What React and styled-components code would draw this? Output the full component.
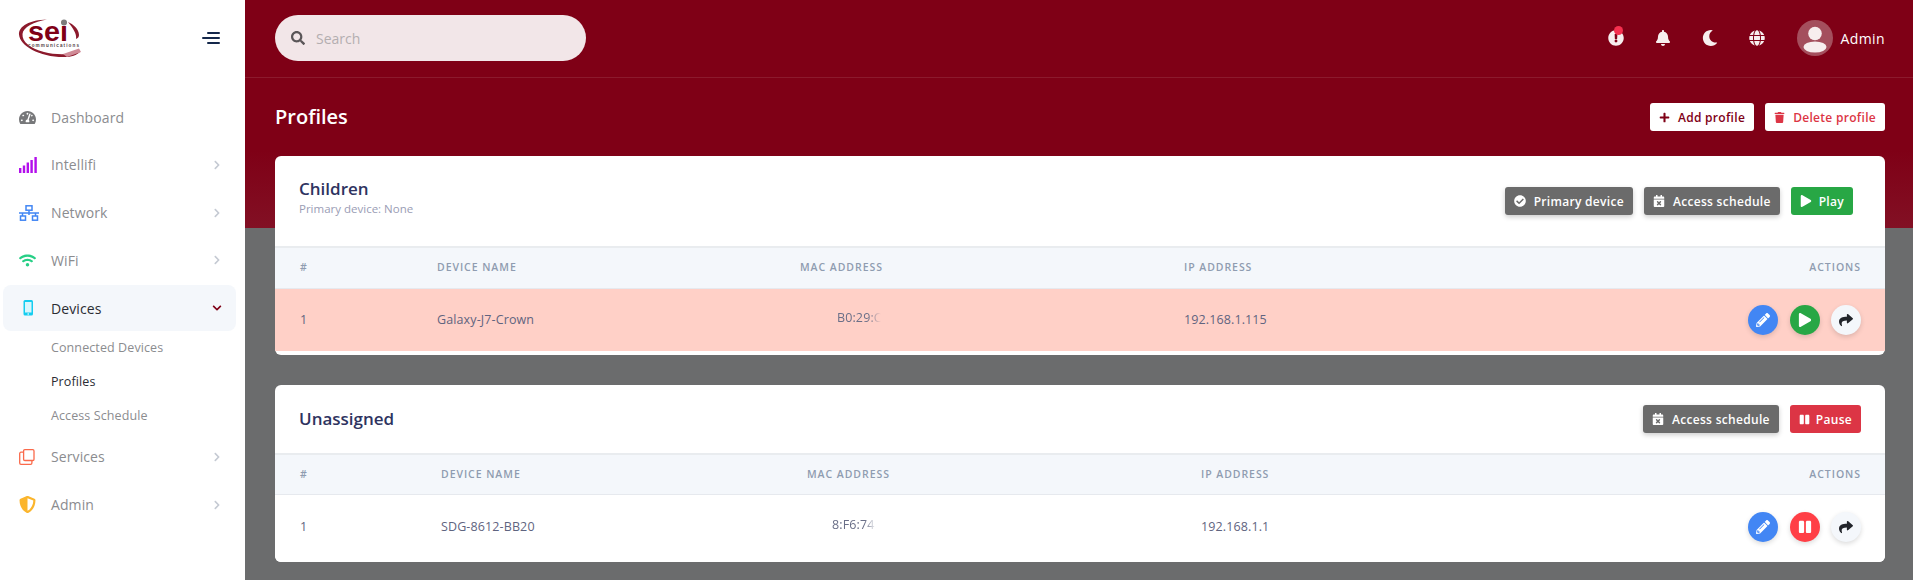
import React from "react";
import styled, { createGlobalStyle } from "styled-components";
import {
  FaTachometerAlt, FaWifi, FaChevronRight, FaChevronDown, FaShieldAlt, FaSearch, FaExclamationCircle,
  FaBell, FaMoon, FaGlobe, FaPlus, FaTrash, FaCheckCircle, FaCalendarTimes, FaPlay, FaPause, FaPencilAlt, FaShare,
} from "react-icons/fa";

const Global = createGlobalStyle`
  html, body { margin: 0; padding: 0; height: 580px; overflow: hidden; background: #6b6c6d; }
  body { font-family: "Open Sans", "Noto Sans", sans-serif; }
  * { box-sizing: border-box; }
`;

const Page = styled.div`display: flex; width: 1913px; height: 580px; overflow: hidden;`;
const Sidebar = styled.aside`width: 245px; flex: none; background: #fff; display: flex; flex-direction: column;`;
const Brand = styled.div`
  height: 94px; padding: 19px 25px 0 19px; display: flex; justify-content: space-between; align-items: flex-start;
  svg { overflow: visible; }
`;
const Burger = styled.div`
  width: 18px; margin-top: 13px; display: flex; flex-direction: column; align-items: flex-end; gap: 3px;
  span { display: block; height: 2px; background: #14284b; border-radius: 1px; }
  span:nth-child(1) { width: 13px; }
  span:nth-child(2) { width: 18px; }
  span:nth-child(3) { width: 13px; }
`;
const Nav = styled.nav`display: flex; flex-direction: column; gap: 1.75px; padding: 0 9px 0 3px;`;
const NavRow = styled.div`
  height: 46px; display: flex; align-items: center; padding: 0 13px 0 16px; border-radius: 8px;
  background: ${p => (p.$open ? "#f4f7fb" : "transparent")};
  color: ${p => (p.$open ? "#2b2d33" : "#8b8c8f")};
  font-size: 14px;
`;
const NavIcon = styled.span`width: 32px; flex: none; display: flex; align-items: center; color: ${p => p.$c}; font-size: 17px;`;
const NavText = styled.span`flex: 1; letter-spacing: .1px;`;
const Chevron = styled.span`width: 12px; display: flex; justify-content: center; font-size: 10px; color: ${p => p.$c || "#c5cad3"};`;
const SubList = styled.div`display: flex; flex-direction: column; margin-bottom: -.5px; margin-top: -2.25px;`;
const SubItem = styled.div`
  height: 34px; line-height: 34px; padding-left: 48px; font-size: 12.5px; letter-spacing: .1px;
  color: ${p => (p.$active ? "#2b2d33" : "#8b8c8f")};
`;

const Main = styled.main`
  flex: 1; min-width: 0; height: 580px;
  background: linear-gradient(#7f0016 0, #7f0016 150px, #821024 228px, #6b6c6d 228px, #6b6c6d 100%);
`;
const Header = styled.header`
  height: 78px; border-bottom: 1px solid rgba(255,255,255,.1); display: flex; align-items: center;
  padding: 0 28px 1px 30px; justify-content: space-between;
`;
const Search = styled.div`
  width: 311px; height: 46px; border-radius: 23px; background: #f2e6e8; display: flex; align-items: center;
  padding-left: 16px; gap: 11px; color: #5a5658; font-size: 14px;
`;
const Placeholder = styled.span`color: #b4aeb0; font-size: 14px;`;
const TopRight = styled.div`display: flex; align-items: center; color: #fff;`;
const TopIcon = styled.span`
  position: relative; width: 47px; height: 20px; display: flex; align-items: center; justify-content: center; font-size: 16px; color: #f7eeee;
`;
const Dot = styled.span`position: absolute; top: -2px; left: 21px; width: 9px; height: 9px; border-radius: 50%; background: #f5304f;`;
const Avatar = styled.span`
  width: 36px; height: 36px; border-radius: 50%; background: #a44f5d; margin-left: 16px; margin-right: 8px; overflow: hidden; display: block;
`;
const UserName = styled.span`font-size: 14px; font-weight: 500; letter-spacing: .4px;`;

const PageHead = styled.div`height: 78px; padding: 0 28px 0 30px; display: flex; align-items: center; justify-content: space-between;`;
const Title = styled.h1`margin: 0; font-size: 20px; font-weight: 600; color: #fff; line-height: 26px;`;
const Row = styled.div`display: flex; gap: ${p => p.$gap || 11}px;`;
const Btn = styled.button`
  height: 28px; border: 0; border-radius: 3px; padding: 0 ${p => p.$px || 9}px; display: flex; align-items: center; gap: ${p => p.$g || 8}px;
  font: 600 12px "Open Sans", "Noto Sans", sans-serif; letter-spacing: .3px;
  background: ${p => p.$bg}; color: ${p => p.$fg || "#fff"};
  box-shadow: ${p => (p.$shadow ? "0 2px 5px rgba(0,0,0,.2)" : "none")};
`;

const Cards = styled.div`display: flex; flex-direction: column; gap: 30px; padding: 0 28px 0 30px;`;
const Card = styled.section`background: #fff; border-radius: 6px; padding-bottom: ${p => p.$pb || 0}px; overflow: hidden;`;
const CardHead = styled.div`
  height: ${p => p.$h}px; display: flex; align-items: ${p => (p.$top ? "flex-start" : "center")}; justify-content: space-between;
  padding: ${p => (p.$top ? "21px" : "0")} ${p => p.$pr}px 0 24px;
`;
const CardTitle = styled.h2`margin: 0; font-size: 17px; font-weight: 600; line-height: 24px; color: #2e3360;`;
const CardSub = styled.p`margin: -1px 0 0; font-size: 11.5px; line-height: 18px; color: #9a9db5; font-weight: 500;`;
const CardActions = styled.div`display: flex; gap: 11px; margin-top: ${p => p.$mt || 0}px;`;
const GridRow = styled.div`
  display: grid; align-items: center; grid-template-columns: ${p => p.$cols}; padding: 0 24px 0 25px;
`;
const HeadRow = styled(GridRow)`
  height: ${p => p.$h}px; background: #f4f7fb; border-top: 2px solid #e9ecef; border-bottom: 1px solid #e6e9ee; padding-bottom: 2px;
  font-size: 10.5px; font-weight: 600; letter-spacing: .95px; text-transform: uppercase; color: #8f9cb0;
`;
const BodyRow = styled(GridRow)`
  height: ${p => p.$h}px; background: ${p => p.$bg || "#fff"}; font-size: 12.5px; color: #5f6480; letter-spacing: .12px;
  padding-bottom: ${p => p.$pb || 0}px;
`;
const Cell = styled.span`margin-bottom: 2px;`;
const RightCell = styled.div`display: flex; justify-content: flex-end; gap: 11.5px;`;
const Mac = styled.span`
  display: inline-block; margin-left: ${p => p.$ml}px; width: ${p => p.$w}px; white-space: nowrap; overflow: hidden; color: #6a6f88;
  -webkit-mask-image: linear-gradient(90deg, ${p => p.$mask});
  mask-image: linear-gradient(90deg, ${p => p.$mask});
`;
const RoundBtn = styled.span`
  width: 30px; height: 30px; border-radius: 50%; display: flex; align-items: center; justify-content: center;
  background: ${p => p.$bg}; color: ${p => p.$fg || "#fff"}; font-size: 14px; box-shadow: 0 2px 5px rgba(0,0,0,.14);
`;

const Logo = () => (
  <svg width="62" height="39" viewBox="0 0 62 39">
    <path d="M28 .5C11 1 -.5 7 0 15.5C.8 27 21 38.5 46 38C52 38 58 36 61 33C50 36 36 36 25 33C11 29 3 23 3.5 15C4 8 15 3 28 .5Z" fill="#8c1a2c" />
    <path d="M49 3C54 5 60 10 60 16C60 18 59 19 57 20C58 15 54 9 49 3Z" fill="#8c1a2c" />
    <path d="M44 35L60 29.5L62 33L48 38Z" fill="#d08b97" />
    <text x="9" y="22" fontFamily="Liberation Sans, sans-serif" fontWeight="700" fontSize="28" fill="#7f0016" textLength="40" lengthAdjust="spacingAndGlyphs">sei</text>
    <circle cx="45" cy="3.5" r="3" fill="#7b7b7b" />
    <text x="9" y="27.5" fontFamily="Liberation Sans, sans-serif" fontWeight="700" fontSize="4.6" fill="#55464a" textLength="51" lengthAdjust="spacing">communications</text>
  </svg>
);
const SignalIcon = () => (
  <svg width="18" height="16" viewBox="0 0 18 16" fill="#b30fec">
    <rect x="0" y="11" width="2.4" height="5" /><rect x="3.8" y="8.5" width="2.4" height="7.5" />
    <rect x="7.6" y="5.5" width="2.4" height="10.5" /><rect x="11.4" y="3" width="2.4" height="13" />
    <rect x="15.4" y="0" width="2.4" height="16" />
  </svg>
);
const NetIcon = () => (
  <svg width="20" height="16" viewBox="0 0 20 16" fill="none" stroke="#4286f4" strokeWidth="1.5">
    <rect x="7" y=".8" width="6" height="4.4" /><path d="M10 5.2V10M0 8h20M3.5 8v3M16.5 8v3" />
    <rect x="1.5" y="11" width="5" height="4.2" /><rect x="13.5" y="11" width="5" height="4.2" />
  </svg>
);
const PhoneIcon = () => (
  <svg width="15" height="16" viewBox="0 0 15 16">
    <rect x="4.5" y="0" width="9.5" height="15.5" rx="1.5" fill="#14cdf0" /><rect x="6" y="2" width="6.5" height="10.5" fill="#d9f6fc" />
    <circle cx="9.2" cy="14" r=".8" fill="#fff" />
  </svg>
);
const CopyIcon = () => (
  <svg width="16" height="16" viewBox="0 0 16 16" fill="none" stroke="#fa6a4b" strokeWidth="1.3">
    <rect x="4.6" y=".7" width="10.4" height="10.8" rx="1.2" /><path d="M4.6 3.2H2C1.2 3.2.7 3.8.7 4.6V14c0 .8.5 1.3 1.3 1.3h9.6c.8 0 1.3-.5 1.3-1.3v-2.5" />
  </svg>
);
const UserShape = () => (
  <svg width="36" height="36" viewBox="0 0 36 36" fill="#f7eeee">
    <circle cx="18" cy="13.5" r="6.8" /><ellipse cx="18" cy="27" rx="11.5" ry="5.5" />
  </svg>
);

const Item = ({ icon, color, label, open, chev = true }) => (
  <NavRow $open={open}>
    <NavIcon $c={color}>{icon}</NavIcon>
    <NavText>{label}</NavText>
    {chev && (open ? <Chevron $c="#7f0016"><FaChevronDown /></Chevron> : <Chevron><FaChevronRight /></Chevron>)}
  </NavRow>
);

const Actions = ({ play }) => (
  <RightCell>
    <RoundBtn $bg="#4286f4"><FaPencilAlt /></RoundBtn>
    {play ? <RoundBtn $bg="#28a745"><FaPlay /></RoundBtn> : <RoundBtn $bg="#ff3f46"><FaPause /></RoundBtn>}
    <RoundBtn $bg="#f4f7fb" $fg="#22252b"><FaShare /></RoundBtn>
  </RightCell>
);

const Head = ({ cols, h }) => (
  <HeadRow $cols={cols} $h={h}>
    <span>#</span><span>Device name</span><span>MAC address</span><span>IP address</span>
    <RightCell>Actions</RightCell>
  </HeadRow>
);

export default function App() {
  const c1 = "137px 363px 384px 1fr 200px";
  const c2 = "141px 366px 394px 1fr 200px";
  return (
    <Page>
      <Global />
      <Sidebar>
        <Brand><Logo /><Burger><span /><span /><span /></Burger></Brand>
        <Nav>
          <Item icon={<FaTachometerAlt />} color="#77787a" label="Dashboard" chev={false} />
          <Item icon={<SignalIcon />} label="Intellifi" />
          <Item icon={<NetIcon />} label="Network" />
          <Item icon={<FaWifi />} color="#27cf86" label="WiFi" />
          <Item icon={<PhoneIcon />} label="Devices" open />
          <SubList>
            <SubItem>Connected Devices</SubItem>
            <SubItem $active>Profiles</SubItem>
            <SubItem>Access Schedule</SubItem>
          </SubList>
          <Item icon={<CopyIcon />} label="Services" />
          <Item icon={<FaShieldAlt />} color="#fbb52c" label="Admin" />
        </Nav>
      </Sidebar>
      <Main>
        <Header>
          <Search><FaSearch /><Placeholder>Search</Placeholder></Search>
          <TopRight>
            <TopIcon><FaExclamationCircle /><Dot /></TopIcon>
            <TopIcon><FaBell /></TopIcon>
            <TopIcon><FaMoon /></TopIcon>
            <TopIcon><FaGlobe /></TopIcon>
            <Avatar><UserShape /></Avatar>
            <UserName>Admin</UserName>
          </TopRight>
        </Header>
        <PageHead>
          <Title>Profiles</Title>
          <Row>
            <Btn $bg="#fff" $fg="#7f0016"><FaPlus size={11} />Add profile</Btn>
            <Btn $bg="#fff" $fg="#dc3545"><FaTrash size={11} />Delete profile</Btn>
          </Row>
        </PageHead>
        <Cards>
          <Card $pb={4}>
            <CardHead $h={90} $pr={32} $top>
              <div>
                <CardTitle>Children</CardTitle>
                <CardSub>Primary device: None</CardSub>
              </div>
              <CardActions $mt={10}>
                <Btn $bg="#6b6b6b" $shadow><FaCheckCircle size={12} />Primary device</Btn>
                <Btn $bg="#6b6b6b" $shadow><FaCalendarTimes size={12} />Access schedule</Btn>
                <Btn $bg="#28a745" $g={7}><FaPlay size={12} />Play</Btn>
              </CardActions>
            </CardHead>
            <Head cols={c1} h={43} />
            <BodyRow $cols={c1} $h={62} $bg="#ffd0c7">
              <Cell>1</Cell><Cell>Galaxy-J7-Crown</Cell>
              <Cell><Mac $ml={37} $w={44} $mask="#000 70%, transparent 100%">B0:29:C4</Mac></Cell>
              <Cell>192.168.1.115</Cell>
              <Actions play />
            </BodyRow>
          </Card>
          <Card>
            <CardHead $h={68} $pr={24}>
              <CardTitle>Unassigned</CardTitle>
              <CardActions>
                <Btn $bg="#6b6b6b" $shadow><FaCalendarTimes size={12} />Access schedule</Btn>
                <Btn $bg="#dc3545" $g={6}><FaPause size={11} />Pause</Btn>
              </CardActions>
            </CardHead>
            <Head cols={c2} h={42} />
            <BodyRow $cols={c2} $h={67} $pb={3}>
              <Cell>1</Cell><Cell>SDG-8612-BB20</Cell>
              <Cell><Mac $ml={25} $w={44} $mask="#000 75%, transparent 100%">8:F6:74</Mac></Cell>
              <Cell>192.168.1.1</Cell>
              <Actions />
            </BodyRow>
          </Card>
        </Cards>
      </Main>
    </Page>
  );
}
